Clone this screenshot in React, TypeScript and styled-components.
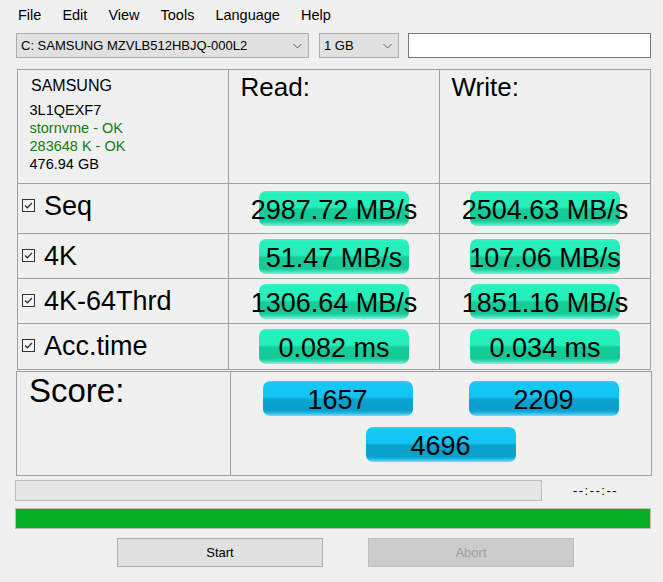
import React from "react";
import styled, { createGlobalStyle, css } from "styled-components";

const GlobalStyle = createGlobalStyle`
  html, body { margin: 0; padding: 0; background: #f0f0f0; }
  * { box-sizing: border-box; }
`;

const FONT = `"Liberation Sans", Arial, sans-serif`;

const Window = styled.div`
  width: 663px;
  height: 582px;
  background: #f0f0f0;
  font-family: ${FONT};
  color: #000;
  overflow: hidden;
`;

const MenuBar = styled.div`
  display: flex;
  align-items: center;
  height: 29px;
  padding-left: 7.5px;
`;

const MenuItem = styled.span`
  padding: 0 10.5px;
  font-size: 14.5px;
  line-height: 20px;
`;

const Toolbar = styled.div`
  display: flex;
  align-items: center;
  margin-top: 4px;
  padding-left: 16px;
  height: 25px;
`;

const Combo = styled.div<{ $w: number; $ml?: number }>`
  display: flex;
  align-items: center;
  justify-content: space-between;
  width: ${(p) => p.$w}px;
  height: 25px;
  margin-left: ${(p) => p.$ml ?? 0}px;
  padding: 0 6px 0 4px;
  background: #e1e1e1;
  border: 1px solid #adadad;
  font-size: 13px;
  white-space: nowrap;
`;

const TextBox = styled.div`
  width: 243px;
  height: 25px;
  margin-left: 9px;
  background: #fff;
  border: 1px solid #7a7a7a;
`;

const ResultsGrid = styled.div`
  display: grid;
  grid-template-columns: repeat(3, 210px);
  grid-template-rows: 113px 49px 44px 44px 45px;
  gap: 1px;
  padding: 1px;
  width: 634px;
  margin: 11px 0 0 17px;
  background: #a0a0a0;
`;

const Cell = styled.div`
  background: #f0f0f0;
  position: relative;
`;

const InfoCell = styled(Cell)`
  padding: 6px 0 0 11.5px;
`;

const DriveName = styled.div`
  font-size: 16px;
  line-height: 20px;
  padding-left: 1.5px;
  margin-bottom: 5px;
`;

const InfoLine = styled.div<{ $ok?: boolean }>`
  font-size: 14.5px;
  line-height: 18px;
  color: ${(p) => (p.$ok ? "#107c10" : "#000")};
`;

const HeaderCell = styled(Cell)`
  padding: 2px 0 0 11.5px;
  font-size: 26px;
  line-height: 30px;
`;

const LabelCell = styled(Cell)`
  display: flex;
  padding: 0 0 0 4px;
`;

const LabelLine = styled.div`
  display: flex;
  align-items: center;
  height: 31px;
  margin-top: 7px;
  font-size: 27px;
`;

const CheckWrap = styled.span`
  display: inline-flex;
  margin-right: 9px;
  margin-top: -2px;
`;

const ValueCell = styled(Cell)`
  display: flex;
  align-items: center;
  justify-content: center;
`;

const barStyles = {
  green: css`
    background: linear-gradient(
      to bottom,
      #3ef4c9 0%,
      #26f0bc 8%,
      #24eeba 46%,
      #16cc99 52%,
      #14c996 84%,
      #3edcb4 92%,
      #7ef3da 100%
    );
  `,
  blue: css`
    background: linear-gradient(
      to bottom,
      #2ad2fb 0%,
      #14c8f5 8%,
      #12c4f3 46%,
      #0aa2d0 52%,
      #0a9fcd 84%,
      #2cb8e4 92%,
      #7edcf7 100%
    );
  `,
};

const Bar = styled.div<{ $kind: "green" | "blue" }>`
  display: flex;
  align-items: center;
  justify-content: center;
  width: 150px;
  height: 35px;
  padding-top: 4px;
  border-radius: 7px;
  ${(p) => barStyles[p.$kind]}
  font-size: 27px;
  line-height: 31px;
  white-space: nowrap;
`;

const ScoreBox = styled.div`
  display: grid;
  grid-template-columns: 213px 420px;
  gap: 1px;
  width: 636px;
  height: 105px;
  margin: 1px 0 0 16px;
  border: 1px solid #a0a0a0;
  background: #a0a0a0;
`;

const ScoreLabel = styled(Cell)`
  padding: 0 0 0 12px;
  font-size: 33px;
  line-height: 38px;
`;

const ScoreValues = styled(Cell)`
  display: grid;
  grid-template-columns: 206px 206px;
  grid-template-rows: 35px 35px;
  row-gap: 11px;
  justify-items: center;
  padding: 9px 0 0 3.5px;
`;

const TotalSlot = styled.div`
  grid-column: 1 / span 2;
`;

const ProgressRow = styled.div`
  display: flex;
  align-items: center;
  margin: 4px 0 0 15px;
  height: 21px;
`;

const ProgressTrack = styled.div`
  width: 527px;
  height: 21px;
  background: #e6e6e6;
  border: 1px solid #bcbcbc;
`;

const TimeText = styled.div`
  flex: 1;
  text-align: center;
  padding-right: 14px;
  font-size: 13px;
  letter-spacing: 1.5px;
`;

const DoneBar = styled.div`
  width: 636px;
  height: 21px;
  margin: 7px 0 0 15px;
  background: #06b025;
  border: 1px solid #bcbcbc;
`;

const ButtonRow = styled.div`
  display: flex;
  margin: 9px 0 0 117px;
  gap: 45px;
`;

const Button = styled.div<{ $disabled?: boolean }>`
  display: flex;
  align-items: center;
  justify-content: center;
  width: 206px;
  height: 29px;
  font-size: 13px;
  background: ${(p) => (p.$disabled ? "#cccccc" : "#e1e1e1")};
  border: 1px solid ${(p) => (p.$disabled ? "#bfbfbf" : "#adadad")};
  color: ${(p) => (p.$disabled ? "#a0a0a0" : "#000")};
`;

const Chevron = () => (
  <svg width="9" height="6" viewBox="0 0 9 6">
    <path d="M0.5 1 L4.5 5 L8.5 1" fill="none" stroke="#606060" strokeWidth="1" />
  </svg>
);

const CheckBox = () => (
  <svg width="13" height="13" viewBox="0 0 13 13">
    <rect x="0.5" y="0.5" width="12" height="12" fill="#f4f4f4" stroke="#333" />
    <path d="M3 6.5 L5.3 8.8 L10 4" fill="none" stroke="#333" strokeWidth="1.3" />
  </svg>
);

const rows = [
  { label: "Seq", read: "2987.72 MB/s", write: "2504.63 MB/s" },
  { label: "4K", read: "51.47 MB/s", write: "107.06 MB/s" },
  { label: "4K-64Thrd", read: "1306.64 MB/s", write: "1851.16 MB/s" },
  { label: "Acc.time", read: "0.082 ms", write: "0.034 ms" },
];

export default function App() {
  return (
    <Window>
      <GlobalStyle />
      <MenuBar>
        {["File", "Edit", "View", "Tools", "Language", "Help"].map((m) => (
          <MenuItem key={m}>{m}</MenuItem>
        ))}
      </MenuBar>
      <Toolbar>
        <Combo $w={293}>
          <span>C: SAMSUNG MZVLB512HBJQ-000L2</span>
          <Chevron />
        </Combo>
        <Combo $w={80} $ml={10}>
          <span>1 GB</span>
          <Chevron />
        </Combo>
        <TextBox />
      </Toolbar>

      <ResultsGrid>
        <InfoCell>
          <DriveName>SAMSUNG</DriveName>
          <InfoLine>3L1QEXF7</InfoLine>
          <InfoLine $ok>stornvme - OK</InfoLine>
          <InfoLine $ok>283648 K - OK</InfoLine>
          <InfoLine>476.94 GB</InfoLine>
        </InfoCell>
        <HeaderCell>Read:</HeaderCell>
        <HeaderCell>Write:</HeaderCell>
        {rows.map((r) => (
          <React.Fragment key={r.label}>
            <LabelCell>
              <LabelLine>
                <CheckWrap>
                  <CheckBox />
                </CheckWrap>
                {r.label}
              </LabelLine>
            </LabelCell>
            <ValueCell>
              <Bar $kind="green">{r.read}</Bar>
            </ValueCell>
            <ValueCell>
              <Bar $kind="green">{r.write}</Bar>
            </ValueCell>
          </React.Fragment>
        ))}
      </ResultsGrid>

      <ScoreBox>
        <ScoreLabel>Score:</ScoreLabel>
        <ScoreValues>
          <Bar $kind="blue">1657</Bar>
          <Bar $kind="blue">2209</Bar>
          <TotalSlot>
            <Bar $kind="blue">4696</Bar>
          </TotalSlot>
        </ScoreValues>
      </ScoreBox>

      <ProgressRow>
        <ProgressTrack />
        <TimeText>--:--:--</TimeText>
      </ProgressRow>
      <DoneBar />
      <ButtonRow>
        <Button>Start</Button>
        <Button $disabled>Abort</Button>
      </ButtonRow>
    </Window>
  );
}
